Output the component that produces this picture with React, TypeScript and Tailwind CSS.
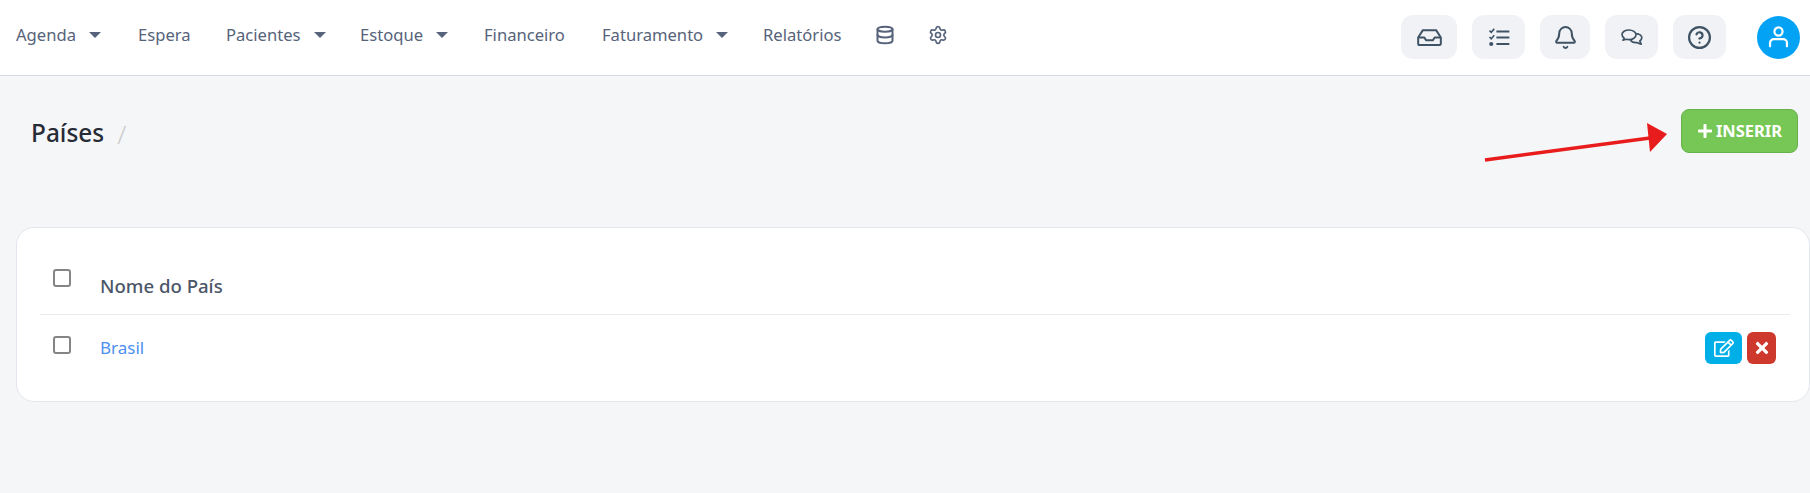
import { Database, Settings, Bell, CircleHelp } from "lucide-react";
import { FaRegEdit, FaTimes, FaPlus } from "react-icons/fa";

const menu = [
  { label: "Agenda", caret: true, width: "w-[122px]" },
  { label: "Espera", caret: false, width: "w-[88px]" },
  { label: "Pacientes", caret: true, width: "w-[134px]" },
  { label: "Estoque", caret: true, width: "w-[124px]" },
  { label: "Financeiro", caret: false, width: "w-[118px]" },
  { label: "Faturamento", caret: true, width: "w-[161px]" },
  { label: "Relatórios", caret: false, width: "w-[114px]" },
];

function InboxIcon() {
  return (
    <svg width="25" height="17" viewBox="0 0 26 18" fill="none" stroke="#3f5365" strokeWidth="2.1" strokeLinejoin="round">
      <path d="M6 1.2h14l5 7.8v6.5a1.5 1.5 0 0 1-1.5 1.5h-21A1.5 1.5 0 0 1 1 15.5V9z" />
      <path d="M1 9h6.5l2 3h7l2-3H25" />
    </svg>
  );
}

function TasksIcon() {
  return (
    <svg width="22" height="19" viewBox="0 0 24 22" fill="none" stroke="#3f5365" strokeWidth="2.2">
      <path d="M1 3l2 2 3.5-4M1 10.5l2 2 3.5-4" strokeWidth="1.8" />
      <circle cx="3" cy="18.5" r="2.4" fill="#3f5365" stroke="none" />
      <path d="M9 4h15M9 11h15M9 18.5h15" />
    </svg>
  );
}

function ChatIcon() {
  return (
    <svg width="22" height="17" viewBox="0 0 22 17" fill="none" stroke="#3f5365" strokeWidth="1.7" strokeLinejoin="round">
      <path d="M8 1C4.2 1 1 3 1 5.6c0 1.4.9 2.6 2.2 3.5L2 11.2l3.2-.9c.9.3 1.8.4 2.8.4 3.8 0 7-2.2 7-4.9S11.8 1 8 1z" />
      <path d="M15.2 4.6c3 .3 5.6 2 5.6 4.2 0 1.3-.8 2.4-2 3.2l1.4 3.2-4.2-1.6c-3 .3-5.5-.7-6.5-2.7" />
    </svg>
  );
}

function UserIcon() {
  return (
    <svg width="21" height="22" viewBox="0 0 24 26" fill="none" stroke="#ffffff" strokeWidth="2.6">
      <circle cx="12" cy="6.5" r="4.8" />
      <path d="M2 24v-4a4.5 4.5 0 0 1 4.5-4.5h11A4.5 4.5 0 0 1 22 20v4" strokeLinecap="round" />
    </svg>
  );
}

function TopButton({ width, children }: { width: string; children: React.ReactNode }) {
  return (
    <button className={`${width} h-[44px] rounded-xl bg-[#f0f2f5] flex items-center justify-center`}>
      {children}
    </button>
  );
}

function Checkbox() {
  return <span className="block w-[18px] h-[18px] rounded-[3px] border-2 border-[#858585] bg-white" />;
}

export default function App() {
  return (
    <div className="relative h-[493px] overflow-hidden bg-[#f5f6f8] font-['Noto_Sans',sans-serif]">
      <header className="h-[76px] bg-white border-b border-[#d5d8e6] flex items-center pl-[16px] pr-[10px]">
        <nav className="flex items-center flex-1 text-[16.6px] text-[#56637a] -mt-[4px]">
          {menu.map((item) => (
            <a key={item.label} className={`${item.width} flex items-center shrink-0`}>
              {item.label}
              {item.caret && (
                <span className="ml-[13px] w-0 h-0 border-x-[6px] border-x-transparent border-t-[6px] border-t-[#56637a]" />
              )}
            </a>
          ))}
          <Database size={20} strokeWidth={2.4} className="ml-[-2px] text-[#56637a]" />
          <Settings size={20} strokeWidth={2} className="ml-[33px] text-[#56637a]" />
        </nav>
        <div className="flex items-center -mt-[1px]">
          <div className="flex gap-[15px]">
            <TopButton width="w-[56px]"><InboxIcon /></TopButton>
            <TopButton width="w-[53px]"><TasksIcon /></TopButton>
            <TopButton width="w-[50px]"><Bell size={25} strokeWidth={1.9} className="text-[#3f5365]" /></TopButton>
            <TopButton width="w-[53px]"><ChatIcon /></TopButton>
            <TopButton width="w-[53px]"><CircleHelp size={25} strokeWidth={2.1} className="text-[#3f5365]" /></TopButton>
          </div>
          <div className="ml-[31px] w-[43px] h-[43px] rounded-full bg-[#03a2f5] flex items-center justify-center">
            <UserIcon />
          </div>
        </div>
      </header>

      <main>
        <div className="flex items-start justify-between pl-[31px] pr-[12px] pt-[33px] h-[151px]">
          <div className="flex items-center mt-[3px]">
            <h1 className="text-[24.4px] leading-[36px] font-medium text-[#262b36]">Países</h1>
            <span className="ml-[13px] mt-[3px] text-[26px] font-light text-[#cccccc]">/</span>
          </div>
          <button className="w-[117px] h-[44px] rounded-lg bg-[#76c755] border border-[#68b04b] text-white text-[16.5px] font-bold flex items-center justify-center gap-[3px]">
            <FaPlus size={16} />
            INSERIR
          </button>
        </div>

        <section className="ml-[16px] h-[175px] rounded-[18px] bg-white border border-[#e4e6ee] pl-[23px] pr-[19px]">
          <div className="h-[87px] border-b border-[#e9ebf0] flex items-start pl-[13px]">
            <span className="mt-[41px]"><Checkbox /></span>
            <span className="ml-[29px] mt-[44px] text-[18.6px] font-medium text-[#4b5669]">Nome do País</span>
          </div>
          <div className="h-[65px] flex items-center pl-[13px]">
            <span className="-mt-[6px]"><Checkbox /></span>
            <a className="ml-[29px] text-[17px] text-[#4e8ff0]">Brasil</a>
            <div className="ml-auto flex gap-[5px] pr-[14px]">
              <button className="w-[37px] h-[32px] rounded-md bg-[#00afe8] text-white flex items-center justify-center">
                <FaRegEdit size={20} />
              </button>
              <button className="w-[29px] h-[32px] rounded-md bg-[#cd3a2d] text-white flex items-center justify-center">
                <FaTimes size={18} />
              </button>
            </div>
          </div>
        </section>
      </main>

      {/* annotation arrow drawn over the screenshot */}
      <svg className="absolute left-[1480px] top-[122px]" width="190" height="46" viewBox="0 0 190 46" fill="none">
        <path d="M5 38L170 16" stroke="#e81c1c" strokeWidth="3.5" />
        <path d="M187 12L167 1l3 29z" fill="#e81c1c" />
      </svg>
    </div>
  );
}
